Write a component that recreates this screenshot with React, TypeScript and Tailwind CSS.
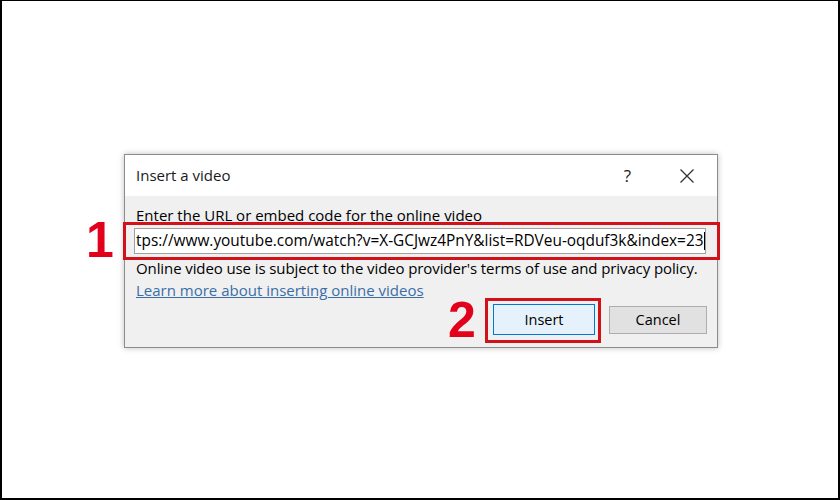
import React from 'react';

const font = { fontFamily: '"Open Sans", "Noto Sans", sans-serif' };
const digit = { fontFamily: '"Liberation Sans", Arial, sans-serif' };

export default function App() {
  return (
    <div className="w-[840px] h-[500px] bg-white border-l-2 border-t border-r-2 border-b-2 border-black relative" style={font}>
      <div className="absolute left-[122px] top-[153px] w-[594px] h-[194px] border border-[#8c8c8c] bg-[#f0f0f0] shadow-[0_0_6px_rgba(0,0,0,0.25)] flex flex-col">
        {/* Title bar */}
        <div className="h-[41px] bg-white flex items-center pl-[11px] pr-[22px] text-[15px] text-[#1a1a1a]">
          <span>Insert a video</span>
          <div className="flex-1" />
          <span className="text-[17px] mr-[48px]">?</span>
          <svg width="16" height="16" viewBox="0 0 16 16" className="stroke-[#333]" strokeWidth="1.3">
            <path d="M1.5 1.5 L14.5 14.5 M14.5 1.5 L1.5 14.5" />
          </svg>
        </div>
        <div className="flex flex-col pl-[11px] pr-[10px] pt-[9px] text-[15px] text-black">
          <div className="leading-[20px]">Enter the URL or embed code for the online video</div>
          <div className="mt-[3px] -ml-[2px] mr-[1px] h-[26px] bg-white border border-[#a0a0a0] flex items-center pl-[1px] text-[15.4px] whitespace-nowrap overflow-hidden">
            <span>tps://www.youtube.com/watch?v=X-GCJwz4PnY&amp;list=RDVeu-oqduf3k&amp;index=23</span>
            <span className="inline-block w-px h-[18px] bg-black ml-[1px]" />
          </div>
          <div className="mt-[3px] leading-[22px] tracking-[-0.1px]">Online video use is subject to the video provider's terms of use and privacy policy.</div>
          <div className="leading-[22px] text-[#3a6ea8] underline">Learn more about inserting online videos</div>
          <div className="flex justify-end mt-[3px] gap-[14px] text-[14.5px]">
            <div className="w-[102px] h-[31px] bg-[#e5f1fb] border border-[#0078d7] flex items-center justify-center">Insert</div>
            <div className="w-[98px] h-[28px] mt-[2px] bg-[#e1e1e1] border border-[#adadad] flex items-center justify-center">Cancel</div>
          </div>
        </div>
      </div>
      {/* Annotations */}
      <div className="absolute left-[121px] top-[221px] w-[597px] h-[38px] border-[3px] border-[#d0131b]" />
      <div className="absolute left-[483px] top-[297px] w-[116px] h-[45px] border-[3px] border-[#d0131b]" />
      <div className="absolute left-[84px] top-[214px] text-[50px] font-bold text-[#e3001b] leading-none" style={digit}>1</div>
      <div className="absolute left-[446px] top-[294px] text-[50px] font-bold text-[#e3001b] leading-none" style={digit}>2</div>
    </div>
  );
}
